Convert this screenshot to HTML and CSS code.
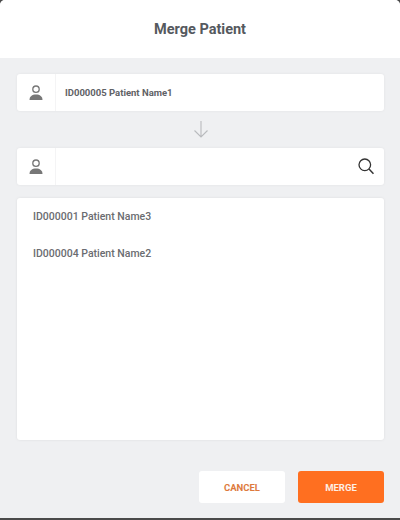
FILE: index.html
```html
<!DOCTYPE html>
<html lang="en">
<head>
    <meta charset="UTF-8">
    <title>Merge Patient</title>
    <link rel="stylesheet" href="styles.css">
</head>
<body>
<div class="dialog">
    <header class="dialog-header">
        <h1>Merge Patient</h1>
    </header>
    <main class="dialog-body">
        <div class="field">
            <span class="field-icon">
                <svg width="16" height="16" viewBox="0 0 16 16"><circle cx="8" cy="4.200" r="3.200" fill="none" stroke="#777" stroke-width="1.300"/><path d="M1.500 15c0-3.600 2.600-5.500 6.500-5.500s6.500 1.900 6.500 5.500z" fill="#777"/></svg>
            </span>
            <span class="field-text">ID000005 Patient Name1</span>
        </div>
        <div class="arrow">
            <svg width="16" height="17" viewBox="0 0 16 17"><path d="M8 0v16M1.500 9.500 8 16l6.500-6.500" fill="none" stroke="#b9bbbe" stroke-width="1.100"/></svg>
        </div>
        <div class="field">
            <span class="field-icon">
                <svg width="16" height="16" viewBox="0 0 16 16"><circle cx="8" cy="4.200" r="3.200" fill="none" stroke="#777" stroke-width="1.300"/><path d="M1.500 15c0-3.600 2.600-5.500 6.500-5.500s6.500 1.900 6.500 5.500z" fill="#777"/></svg>
            </span>
            <span class="field-text"></span>
            <svg class="search" width="16" height="17" viewBox="0 0 16 17"><circle cx="6.800" cy="6.800" r="5.800" fill="none" stroke="#333" stroke-width="1.300"/><path d="M11 11l4.500 4.800" fill="none" stroke="#333" stroke-width="1.500"/></svg>
        </div>
        <ul class="results">
            <li>ID000001 Patient Name3</li>
            <li>ID000004 Patient Name2</li>
        </ul>
        <div class="actions">
            <button class="btn btn-cancel">CANCEL</button>
            <button class="btn btn-merge">MERGE</button>
        </div>
    </main>
</div>
</body>
</html>
```

FILE: styles.css
```css
html, body {
    margin: 0;
    padding: 0;
}
body {
    width: 400px;
    height: 520px;
    overflow: hidden;
    background-color: #4a4a4a;
    font-family: Roboto, "Noto Sans", sans-serif;
}
.dialog {
    height: 518px;
    display: flex;
    flex-direction: column;
    background-color: #eff0f2;
    border-radius: 5px 5px 0 0;
    overflow: hidden;
}
.dialog-header {
    height: 58px;
    flex: none;
    background-color: white;
    display: flex;
    align-items: center;
    justify-content: center;
}
.dialog-header h1 {
    margin: 0;
    font-size: 14.500px;
    font-weight: 700;
    color: #55595e;
}
.dialog-body {
    flex: 1;
    display: flex;
    flex-direction: column;
    padding: 16px 16px 15px 17px;
}
.field {
    height: 37px;
    flex: none;
    display: flex;
    align-items: center;
    background-color: white;
    border-radius: 3px;
    box-shadow: 0 0 3px rgba(0, 0, 0, 0.06);
}
.field-icon {
    width: 38px;
    height: 100%;
    flex: none;
    display: flex;
    align-items: center;
    justify-content: center;
    border-right: 1px solid #f4f4f5;
}
.field-text {
    flex: 1;
    padding: 0 0 1px 9px;
    font-size: 9.500px;
    font-weight: 700;
    color: #5f6266;
}
.search {
    margin-right: 10px;
}
.arrow {
    height: 37px;
    flex: none;
    display: flex;
    align-items: center;
    justify-content: center;
}
.results {
    flex: none;
    height: 242px;
    margin: 13px 0 0;
    padding: 0 16px;
    list-style: none;
    background-color: white;
    border-radius: 3px;
    box-shadow: 0 0 3px rgba(0, 0, 0, 0.08);
}
.results li {
    height: 37px;
    line-height: 37px;
    font-size: 10.500px;
    font-weight: 500;
    color: #6a6c70;
}
.actions {
    display: flex;
    justify-content: flex-end;
    gap: 13px;
    margin-top: 31px;
}
.btn {
    width: 86px;
    height: 32px;
    border: none;
    border-radius: 3px;
    font-family: inherit;
    font-size: 9.500px;
    font-weight: 700;
    cursor: pointer;
}
.btn-cancel {
    background-color: white;
    color: #dd7a3d;
}
.btn-merge {
    background-color: #ff6f20;
    color: #fdeee4;
}
```
